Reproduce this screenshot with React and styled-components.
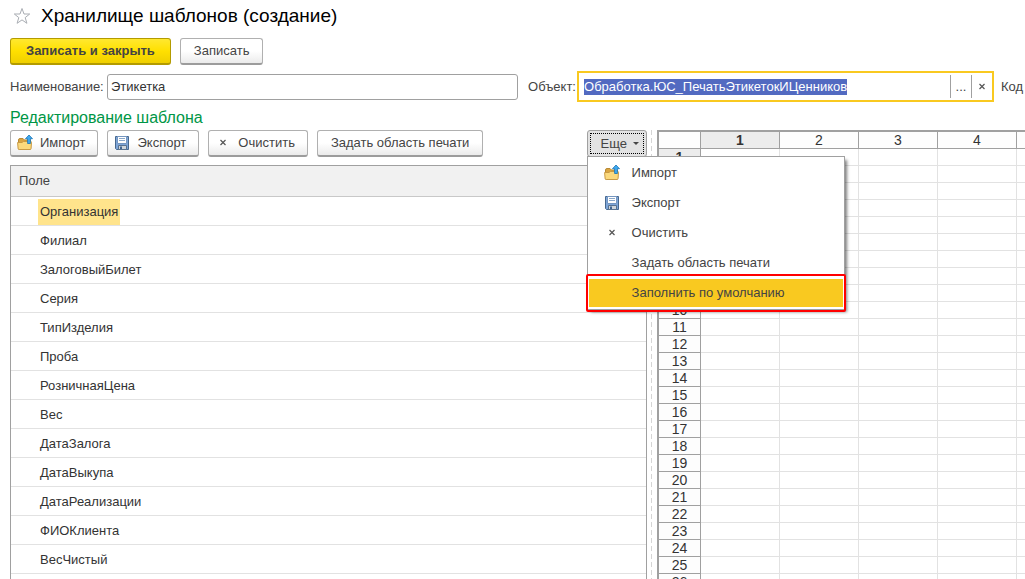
import { useEffect, useRef } from "react";
import styled, { createGlobalStyle, css } from "styled-components";

const fields = [
  "Организация",
  "Филиал",
  "ЗалоговыйБилет",
  "Серия",
  "ТипИзделия",
  "Проба",
  "РозничнаяЦена",
  "Вес",
  "ДатаЗалога",
  "ДатаВыкупа",
  "ДатаРеализации",
  "ФИОКлиента",
  "ВесЧистый",
  "",
];

const columns = [1, 2, 3, 4, 5];
const rows = Array.from({ length: 26 }, (_, i) => i + 1);

const FolderIcon = () => (
  <svg width="16" height="18" viewBox="0 0 16 18" aria-hidden="true">
    <path
      d="M1.5 15V6Q1.500 4.500 3 4.500H6L7.500 6H13.500V15Z"
      fill="#d9a441"
      stroke="#b98a34"
    />
    <path
      d="M.6 8.500H5L6.200 7.500H13.700Q14.500 7.500 14.500 8.300L14.100 14.500Q14 15.500 13 15.500H2.200Q1.200 15.500 1.100 14.500Z"
      fill="#fbd97c"
      stroke="#c89a45"
    />
    <path
      d="M12 1 15.500 4.700H13.400V9.500H10.600V4.700H8.500Z"
      fill="#3fa9f0"
      stroke="#1873b4"
      strokeWidth=".8"
    />
  </svg>
);

const DiskIcon = () => (
  <svg width="16" height="16" viewBox="0 0 16 16" aria-hidden="true">
    <path d="M1.500 1.500H14.500V14.500H2.500L1.500 13.500Z" fill="#7da5d8" stroke="#47688f" />
    <path d="M3.500 1.500H12.500V8.500H3.500Z" fill="#fff" stroke="#7596c0" />
    <path d="M5 3.500H11M5 5.500H11" stroke="#8aa7c9" />
    <path d="M4.500 10.500H12.500V14.500H4.500Z" fill="#d0d5da" stroke="#57718f" />
    <path d="M6 11.500H8V14H6Z" fill="#3f6592" />
  </svg>
);

const CrossIcon = () => (
  <svg width="16" height="16" viewBox="0 0 16 16" aria-hidden="true">
    <path d="M5.500 5 10.500 10M10.500 5 5.500 10" stroke="#555" strokeWidth="1.200" />
  </svg>
);

const StarIcon = () => (
  <svg width="18" height="18" viewBox="0 0 18 18" aria-hidden="true">
    <path
      d="M9 1.500 11 7h5.700l-4.500 3.600 1.700 5.700L9 12.900l-4.900 3.400 1.700-5.700L1.300 7H7Z"
      fill="#fff"
      stroke="#a9adb3"
    />
  </svg>
);

const App = () => {
  const objectRef = useRef(null);

  useEffect(() => {
    objectRef.current.focus();
    objectRef.current.select();
  }, []);

  return (
    <>
      <GlobalStyle />
      <StPage>
        <StHeader>
          <StStar aria-label="Избранное">
            <StarIcon />
          </StStar>
          <h1>Хранилище шаблонов (создание)</h1>
        </StHeader>

        <StBar>
          <StButton $primary>Записать и закрыть</StButton>
          <StButton>Записать</StButton>
        </StBar>

        <StForm>
          <label htmlFor="name">Наименование:</label>
          <StInput id="name" defaultValue="Этикетка" />
          <StObjectLabel htmlFor="object">Объект:</StObjectLabel>
          <StObject>
            <input
              id="object"
              ref={objectRef}
              spellCheck={false}
              defaultValue="Обработка.ЮС_ПечатьЭтикетокИЦенников"
            />
            <button aria-label="Выбрать">...</button>
            <button aria-label="Очистить">
              <CrossIcon />
            </button>
          </StObject>
          <StCode>Код</StCode>
        </StForm>

        <StMain>
          <StLeft>
            <h2>Редактирование шаблона</h2>
            <StBar>
              <StButton $icon>
                <FolderIcon />
                Импорт
              </StButton>
              <StButton $icon>
                <DiskIcon />
                Экспорт
              </StButton>
              <StButton $icon>
                <CrossIcon />
                Очистить
              </StButton>
              <StButton>Задать область печати</StButton>
              <StMore>
                <StMoreButton aria-expanded="true">Еще</StMoreButton>
                <StMenu>
                  <StMenuItem>
                    <FolderIcon />
                    Импорт
                  </StMenuItem>
                  <StMenuItem>
                    <DiskIcon />
                    Экспорт
                  </StMenuItem>
                  <StMenuItem>
                    <CrossIcon />
                    Очистить
                  </StMenuItem>
                  <StMenuItem>Задать область печати</StMenuItem>
                  <StMenuItem $active>Заполнить по умолчанию</StMenuItem>
                </StMenu>
              </StMore>
            </StBar>
            <StFields>
              <thead>
                <tr>
                  <th>Поле</th>
                </tr>
              </thead>
              <tbody>
                {fields.map((field, i) => (
                  <tr key={i}>
                    <td>
                      <StField $selected={i === 0}>{field}</StField>
                    </td>
                  </tr>
                ))}
              </tbody>
            </StFields>
          </StLeft>

          <StSplitter />

          <StSheetWrap>
            <StSheet>
              <colgroup>
                <col className="num" />
                {columns.map((column) => (
                  <col key={column} />
                ))}
              </colgroup>
              <thead>
                <tr>
                  <StHead />
                  {columns.map((column) => (
                    <StHead key={column} $current={column === 1}>
                      {column}
                    </StHead>
                  ))}
                </tr>
              </thead>
              <tbody>
                {rows.map((row) => (
                  <tr key={row}>
                    <StHead $current={row === 1}>{row}</StHead>
                    {columns.map((column) => (
                      <td key={column} />
                    ))}
                  </tr>
                ))}
              </tbody>
            </StSheet>
          </StSheetWrap>
        </StMain>
      </StPage>
    </>
  );
};

export default App;

const GlobalStyle = createGlobalStyle`
  * {
    box-sizing: border-box;
  }

  body {
    margin: 0;
    background: #fff;
  }

  body,
  button,
  input {
    font-family: "Liberation Sans", Arial, sans-serif;
    font-size: 13px;
    line-height: 16px;
    color: #444;
  }

  h1,
  h2 {
    margin: 0;
    font-weight: 400;
  }
`;

const StPage = styled.div`
  display: flex;
  flex-direction: column;
  height: 100vh;
  padding-left: 10px;
  overflow: hidden;
`;

const StHeader = styled.header`
  display: flex;
  align-items: center;
  gap: 10px;
  height: 32px;
  margin-bottom: 6px;
  padding-left: 3px;

  h1 {
    font-size: 19px;
    line-height: 24px;
    color: #000;
  }
`;

const StStar = styled.button`
  display: flex;
  padding: 0;
  border: 0;
  background: none;
`;

const StBar = styled.div`
  display: flex;
  gap: 9px;
`;

const StButton = styled.button`
  display: flex;
  align-items: center;
  gap: 7px;
  height: 27px;
  padding: ${({ $icon }) => ($icon ? "0 12px 0 6px" : "0 13px")};
  border: 1px solid #b0b0b0;
  border-bottom: 2px solid #9c9c9c;
  border-radius: 3px;
  background: linear-gradient(#fff 50%, #ebebeb);
  white-space: nowrap;

  ${({ $primary }) =>
    $primary &&
    css`
      padding: 0 15px;
      border-color: #b39b00;
      background: linear-gradient(#ffe830, #ffe000 50%, #efcf00);
      font-weight: 700;
    `}
`;

const StForm = styled.div`
  display: flex;
  align-items: center;
  height: 31px;
  margin: 6px 0;
  white-space: nowrap;

  label:first-child {
    width: 97px;
  }
`;

const StInput = styled.input`
  flex: 408 1 0;
  min-width: 0;
  height: 26px;
  padding: 0 3px;
  border: 1px solid #a0a0a0;
  border-radius: 3px;
  color: #333;
`;

const StObjectLabel = styled.label`
  width: 59px;
  padding-left: 10px;
`;

const StObject = styled.div`
  display: flex;
  align-items: center;
  flex: 418 1 0;
  min-width: 0;
  height: 31px;
  border: 2px solid #f9c920;

  input {
    flex: 1;
    min-width: 0;
    padding: 0 5px;
    border: 0;
    outline: 0;
  }

  input::selection {
    background: rgba(80, 104, 192, 0.99);
    color: #fff;
  }

  button {
    display: flex;
    align-items: center;
    justify-content: center;
    width: 21px;
    height: 23px;
    padding: 0;
    border: 0;
    border-left: 1px solid #a0a0a0;
    background: none;
  }
`;

const StCode = styled.span`
  width: 31px;
  padding-left: 7px;
`;

const StMain = styled.main`
  display: flex;
  flex: 1;
  min-height: 0;
`;

const StLeft = styled.section`
  flex: 637 1 0;
  min-width: 0;

  h2 {
    margin-bottom: 2px;
    font-size: 16px;
    line-height: 20px;
    color: #009646;
  }
`;

const StMore = styled.div`
  position: relative;
  margin-left: auto;
`;

const StMoreButton = styled.button`
  display: flex;
  align-items: center;
  gap: 6px;
  height: 27px;
  padding: 0 7px 0 13px;
  border: 1px solid #a0a0a0;
  border-radius: 3px;
  outline: 1px dotted #000;
  outline-offset: -4px;
  background: #e2e2e2;

  &::after {
    content: "";
    border: 3px solid transparent;
    border-top-color: #444;
    border-bottom: 0;
  }
`;

const StMenu = styled.div`
  position: absolute;
  z-index: 1;
  top: 100%;
  left: 0;
  width: 258px;
  margin-top: -1px;
  padding: 1px 0;
  border: 1px solid #a0a0a0;
  background: #fff;
  box-shadow: 3px 3px 3px -1px rgba(0, 0, 0, 0.5);
`;

const StMenuItem = styled.button`
  position: relative;
  display: flex;
  align-items: center;
  gap: 12px;
  width: 100%;
  height: 30px;
  padding: 0 16px;
  border: 0;
  background: ${({ $active }) => ($active ? "#f9c920" : "none")};

  &:not(:has(svg)) {
    padding-left: 44px;
  }

  ${({ $active }) =>
    $active &&
    css`
      box-shadow: inset 0 0 0 1px #fff;

      &::after {
        content: "";
        position: absolute;
        inset: -4px -2px;
        border: 2px solid #f00;
        border-radius: 2px;
      }
    `}
`;

const StFields = styled.table`
  width: 100%;
  margin-top: 8px;
  border: 1px solid #a0a0a0;
  border-spacing: 0;

  th {
    height: 31px;
    padding: 0 8px;
    border-bottom: 1px solid #c8c8c8;
    background: #f1f1f1;
    font-weight: 400;
    text-align: left;
  }

  td {
    height: 29px;
    padding: 1px 27px 0;
    border-bottom: 1px solid #e2e2e2;
    color: #333;
  }
`;

const StField = styled.span`
  display: inline-block;
  padding: 5px 2px;
  vertical-align: middle;
  background: ${({ $selected }) => ($selected ? "#ffe48c" : "none")};
`;

const StSplitter = styled.div`
  width: 6px;
  margin: 22px 0 0 4px;
  background: repeating-linear-gradient(#d5d5d5 0 5px, #fff 5px 8px) no-repeat
    left / 1px 100%;
`;

const StSheetWrap = styled.section`
  flex: 366 1 0;
  min-width: 0;
  margin-top: 22px;
  border-top: 2px solid #a0a0a0;
  border-left: 2px solid #a0a0a0;
  overflow: hidden;
`;

const StSheet = styled.table`
  width: 437px;
  border-spacing: 0;
  table-layout: fixed;

  .num {
    width: 42px;
  }

  td {
    height: 17px;
    padding: 0;
    border-right: 1px solid #e2e2e2;
    border-bottom: 1px solid #e2e2e2;
  }
`;

const StHead = styled.th`
  height: 17px;
  padding: 0;
  border-right: 1px solid #a0a0a0;
  border-bottom: 1px solid #a0a0a0;
  background: ${({ $current }) => ($current ? "#ececec" : "#fdfdfd")};
  font-size: 14px;
  font-weight: ${({ $current }) => ($current ? 700 : 400)};
  line-height: 16px;
  color: #333;
`;
